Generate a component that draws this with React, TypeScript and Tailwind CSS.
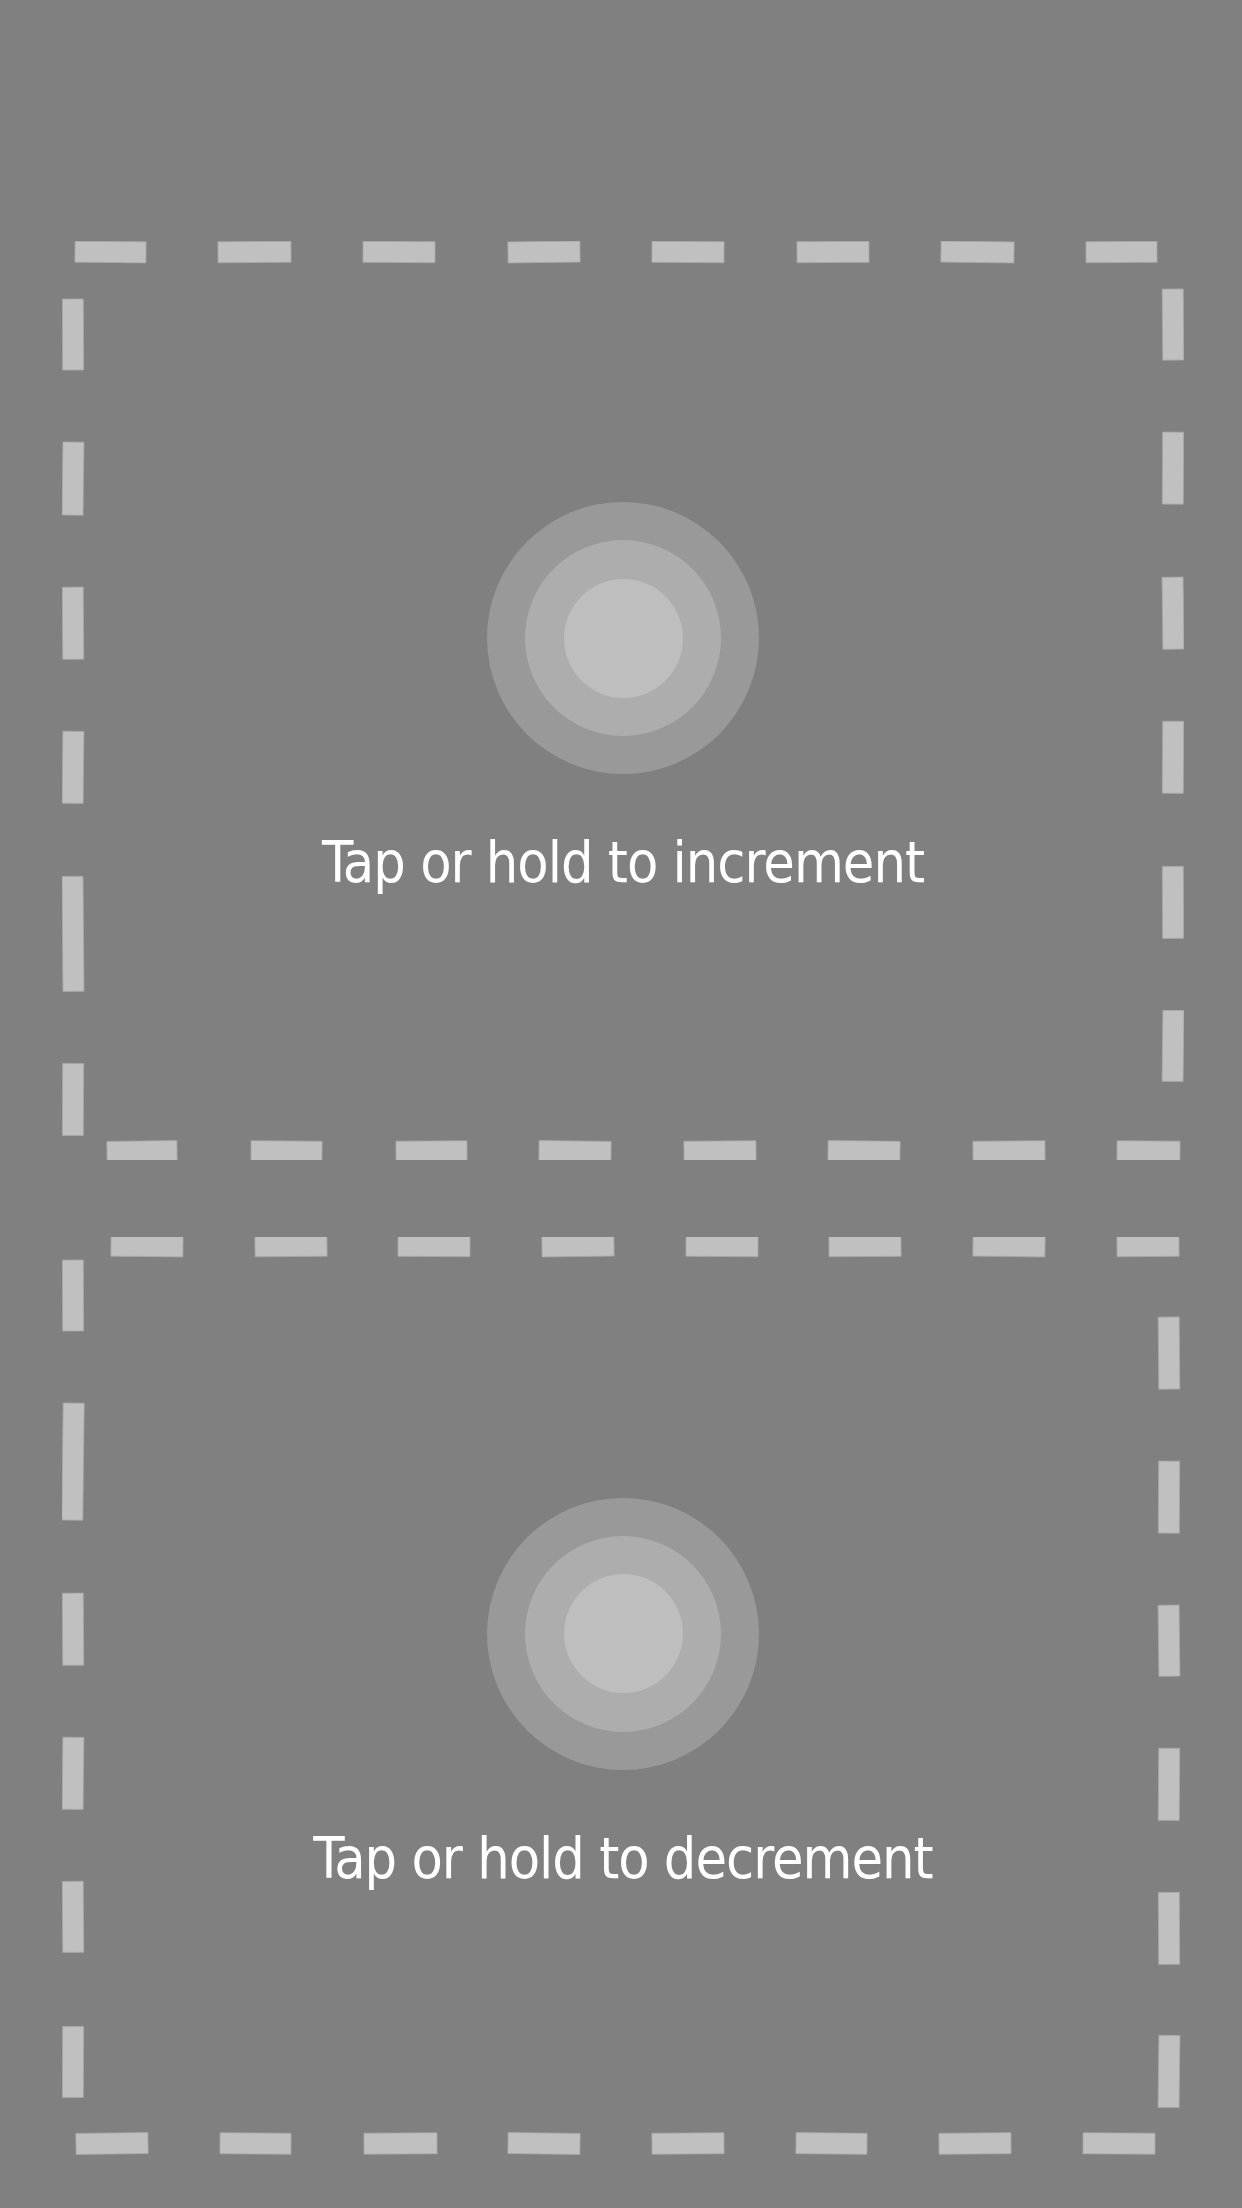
const W = 1122;
const H = 918;

type Side = { top: number[][]; right: number[][]; bottom: number[][]; left: number[][]; ty: number; rx: number; by: number; lx: number };

const incrementSides: Side = {
  ty: 11,
  rx: 1111,
  by: 910,
  lx: 11,
  top: [[13, 84], [156, 229], [301, 373], [446, 518], [590, 662], [735, 807], [879, 952], [1024, 1095]],
  right: [[48, 119], [191, 263], [336, 408], [480, 552], [625, 697], [769, 840]],
  bottom: [[45, 115], [189, 260], [334, 405], [477, 549], [622, 694], [766, 838], [911, 983], [1055, 1118]],
  left: [[58, 129], [201, 274], [346, 418], [490, 562], [635, 750], [822, 894]],
};

const decrementSides: Side = {
  ty: 9,
  rx: 1107,
  by: 906,
  lx: 11,
  top: [[49, 121], [193, 265], [336, 408], [480, 552], [624, 696], [767, 839], [911, 983], [1055, 1117]],
  right: [[80, 152], [224, 296], [368, 439], [511, 583], [655, 727], [798, 870]],
  bottom: [[14, 86], [158, 229], [302, 375], [446, 518], [590, 662], [734, 805], [877, 949], [1021, 1093]],
  left: [[23, 94], [166, 283], [356, 428], [500, 572], [644, 715], [789, 860]],
};

// tiny tilt so the dashes look hand drawn
const tilt = (i: number) => [0.6, -0.5, 0.3, -0.7, 0.4, -0.3, 0.7, -0.4][i % 8];

const DashedFrame = ({ sides }: { sides: Side }) => (
  <svg
    className="absolute inset-0 h-full w-full"
    viewBox={`0 0 ${W} ${H}`}
    preserveAspectRatio="none"
  >
    <g fill="#c0c0c0" stroke="#a8a8a8" strokeWidth={0.8}>
      {sides.top.map(([a, b], i) => (
        <rect key={`t${i}`} x={a} y={sides.ty - 10.5} width={b - a} height={21}
          transform={`rotate(${tilt(i)} ${(a + b) / 2} ${sides.ty})`} />
      ))}
      {sides.bottom.map(([a, b], i) => (
        <rect key={`b${i}`} x={a} y={sides.by - 10.5} width={b - a} height={21}
          transform={`rotate(${tilt(i + 3)} ${(a + b) / 2} ${sides.by})`} />
      ))}
      {sides.left.map(([a, b], i) => (
        <rect key={`l${i}`} x={sides.lx - 10.5} y={a} width={21} height={b - a}
          transform={`rotate(${tilt(i + 5)} ${sides.lx} ${(a + b) / 2})`} />
      ))}
      {sides.right.map(([a, b], i) => (
        <rect key={`r${i}`} x={sides.rx - 10.5} y={a} width={21} height={b - a}
          transform={`rotate(${tilt(i + 1)} ${sides.rx} ${(a + b) / 2})`} />
      ))}
    </g>
  </svg>
);

const TapZone = ({ label, sides }: { label: string; sides: Side }) => (
  <button className="relative flex flex-1 flex-col items-center justify-center">
    <DashedFrame sides={sides} />
    <div className="flex h-[272px] w-[272px] items-center justify-center rounded-full bg-[#999999]">
      <div className="flex h-[196px] w-[196px] items-center justify-center rounded-full bg-[#adadad]">
        <div className="h-[119px] w-[119px] rounded-full bg-[#bebebe]" />
      </div>
    </div>
    <span className="mb-[7px] mt-[60px] text-[57px] leading-none tracking-[-1px] text-white [font-family:'Liberation_Sans_Narrow','DejaVu_Sans_Condensed','Liberation_Sans',sans-serif]">
      {label}
    </span>
  </button>
);

export default function App() {
  return (
    <div className="flex h-[2208px] w-[1242px] flex-col gap-[77px] bg-[#808080] pb-[53px] pl-[62px] pr-[58px] pt-[241px]">
      <TapZone label="Tap or hold to increment" sides={incrementSides} />
      <TapZone label="Tap or hold to decrement" sides={decrementSides} />
    </div>
  );
}
